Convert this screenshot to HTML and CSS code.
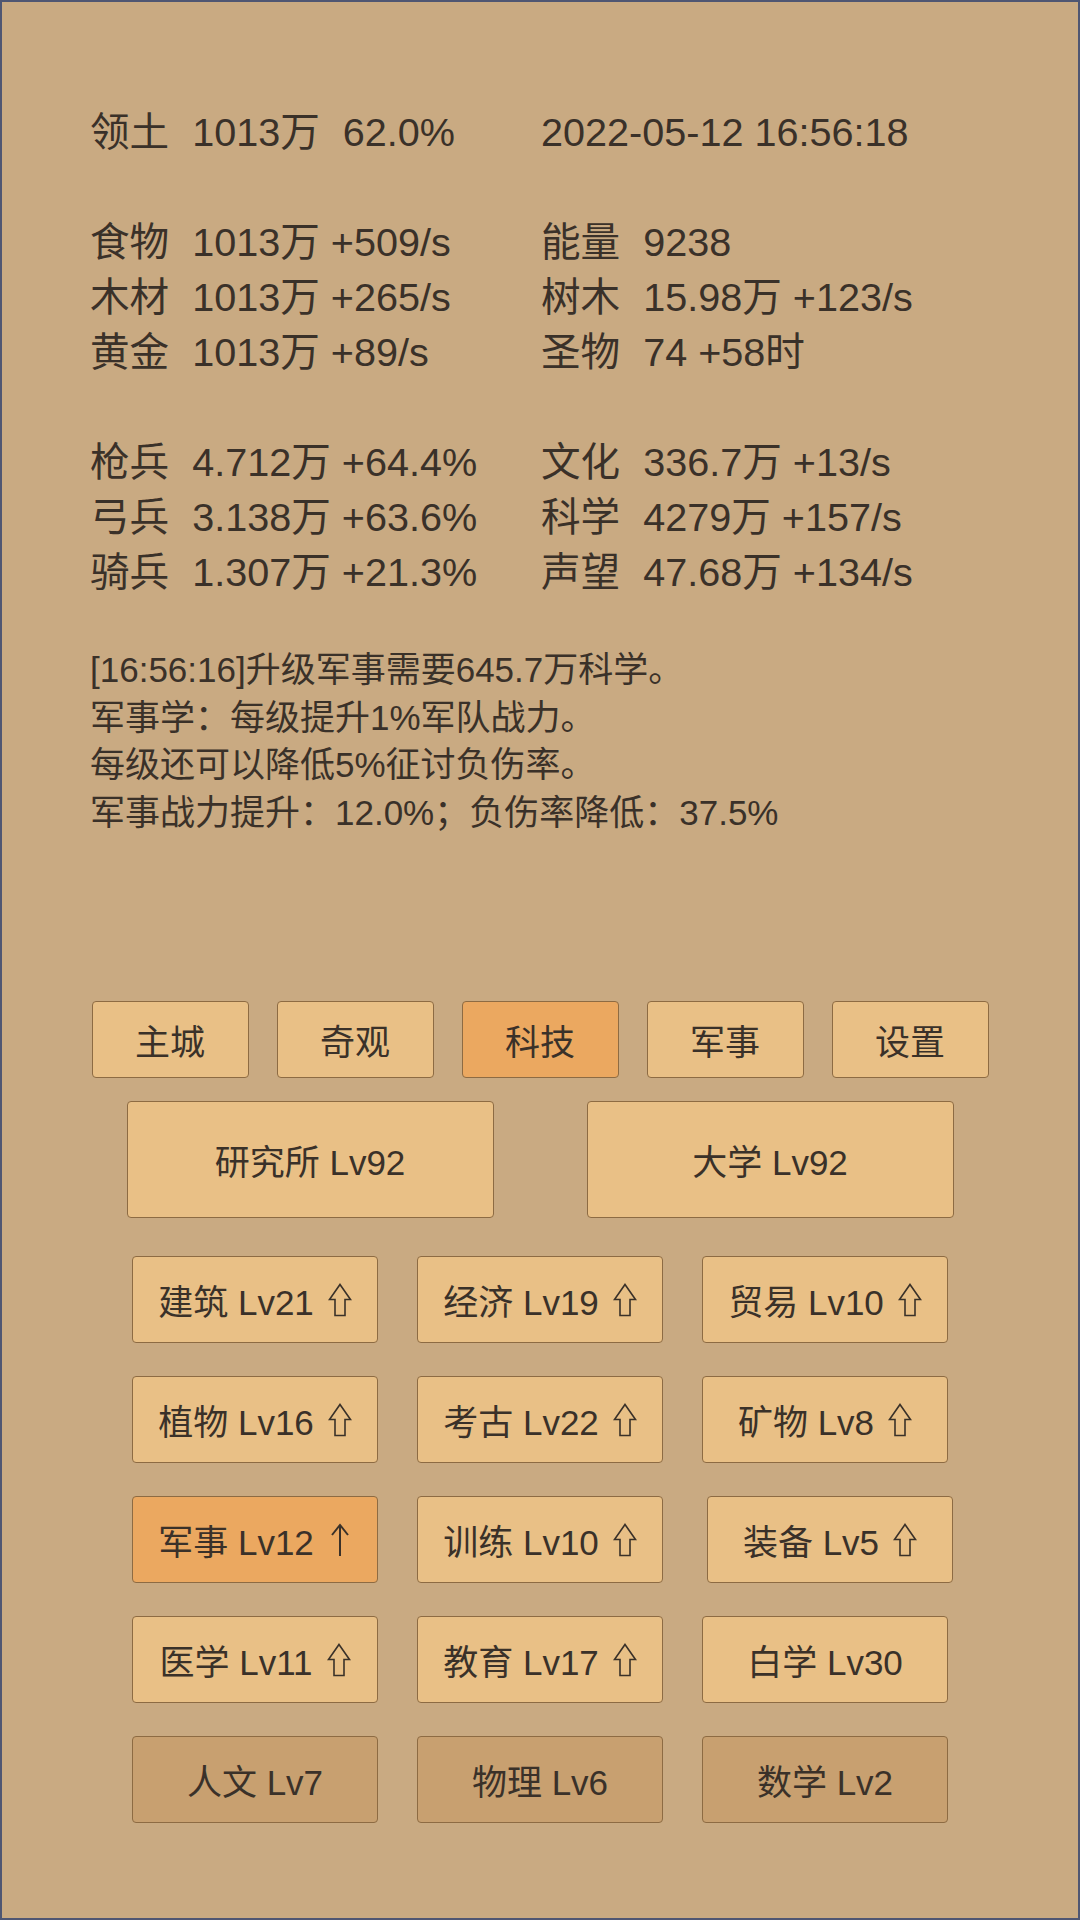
FILE: index.html
```html
<!DOCTYPE html>
<html lang="zh-CN">

<head>
    <meta charset="UTF-8">
    <meta name="viewport" content="width=device-width, initial-scale=1.0">
    <title>科技</title>
    <link rel="stylesheet" href="styles.css">
</head>

<body>
    <div id="screen">

        <div class="stats">
            <div class="row"><span class="name">领土</span><span class="val">1013万</span><span class="val">62.0%</span></div>
            <div class="row">2022-05-12 16:56:18</div>
        </div>

        <div class="stats block">
            <div class="row"><span class="name">食物</span>1013万 +509/s</div>
            <div class="row"><span class="name">能量</span>9238</div>
            <div class="row"><span class="name">木材</span>1013万 +265/s</div>
            <div class="row"><span class="name">树木</span>15.98万 +123/s</div>
            <div class="row"><span class="name">黄金</span>1013万 +89/s</div>
            <div class="row"><span class="name">圣物</span>74 +58时</div>
        </div>

        <div class="stats block">
            <div class="row"><span class="name">枪兵</span>4.712万 +64.4%</div>
            <div class="row"><span class="name">文化</span>336.7万 +13/s</div>
            <div class="row"><span class="name">弓兵</span>3.138万 +63.6%</div>
            <div class="row"><span class="name">科学</span>4279万 +157/s</div>
            <div class="row"><span class="name">骑兵</span>1.307万 +21.3%</div>
            <div class="row"><span class="name">声望</span>47.68万 +134/s</div>
        </div>

        <div id="log">
            <p>[16:56:16]升级军事需要645.7万科学。</p>
            <p>军事学：每级提升1%军队战力。</p>
            <p>每级还可以降低5%征讨负伤率。</p>
            <p>军事战力提升：12.0%；负伤率降低：37.5%</p>
        </div>

        <nav class="tabs">
            <button class="btn tab">主城</button>
            <button class="btn tab">奇观</button>
            <button class="btn tab on">科技</button>
            <button class="btn tab">军事</button>
            <button class="btn tab">设置</button>
        </nav>

        <div class="halls">
            <button class="btn hall">研究所 Lv92</button>
            <button class="btn hall">大学 Lv92</button>
        </div>

        <div class="techs">
            <button class="btn tech">建筑 Lv21 <svg class="up" viewBox="0 0 24 34"><path d="M12 1.5 L22.5 16.5 L17 16.5 L17 32.5 L7 32.5 L7 16.5 L1.5 16.5 Z" /></svg></button>
            <button class="btn tech">经济 Lv19 <svg class="up" viewBox="0 0 24 34"><path d="M12 1.5 L22.5 16.5 L17 16.5 L17 32.5 L7 32.5 L7 16.5 L1.5 16.5 Z" /></svg></button>
            <button class="btn tech">贸易 Lv10 <svg class="up" viewBox="0 0 24 34"><path d="M12 1.5 L22.5 16.5 L17 16.5 L17 32.5 L7 32.5 L7 16.5 L1.5 16.5 Z" /></svg></button>

            <button class="btn tech">植物 Lv16 <svg class="up" viewBox="0 0 24 34"><path d="M12 1.5 L22.5 16.5 L17 16.5 L17 32.5 L7 32.5 L7 16.5 L1.5 16.5 Z" /></svg></button>
            <button class="btn tech">考古 Lv22 <svg class="up" viewBox="0 0 24 34"><path d="M12 1.5 L22.5 16.5 L17 16.5 L17 32.5 L7 32.5 L7 16.5 L1.5 16.5 Z" /></svg></button>
            <button class="btn tech">矿物 Lv8 <svg class="up" viewBox="0 0 24 34"><path d="M12 1.5 L22.5 16.5 L17 16.5 L17 32.5 L7 32.5 L7 16.5 L1.5 16.5 Z" /></svg></button>

            <button class="btn tech on">军事 Lv12 <svg class="up thin" viewBox="0 0 24 34"><path d="M12 2 L12 33 M4 12 L12 2 L20 12" /></svg></button>
            <button class="btn tech">训练 Lv10 <svg class="up" viewBox="0 0 24 34"><path d="M12 1.5 L22.5 16.5 L17 16.5 L17 32.5 L7 32.5 L7 16.5 L1.5 16.5 Z" /></svg></button>
            <button class="btn tech nudge">装备 Lv5 <svg class="up" viewBox="0 0 24 34"><path d="M12 1.5 L22.5 16.5 L17 16.5 L17 32.5 L7 32.5 L7 16.5 L1.5 16.5 Z" /></svg></button>

            <button class="btn tech">医学 Lv11 <svg class="up" viewBox="0 0 24 34"><path d="M12 1.5 L22.5 16.5 L17 16.5 L17 32.5 L7 32.5 L7 16.5 L1.5 16.5 Z" /></svg></button>
            <button class="btn tech">教育 Lv17 <svg class="up" viewBox="0 0 24 34"><path d="M12 1.5 L22.5 16.5 L17 16.5 L17 32.5 L7 32.5 L7 16.5 L1.5 16.5 Z" /></svg></button>
            <button class="btn tech">白学 Lv30</button>

            <button class="btn tech locked">人文 Lv7</button>
            <button class="btn tech locked">物理 Lv6</button>
            <button class="btn tech locked">数学 Lv2</button>
        </div>

    </div>
</body>

</html>
```

FILE: styles.css
```css
body {
    margin: 0;
    padding: 0;
    font-family: 'Liberation Sans', 'Noto Sans CJK SC', sans-serif;
    color: #3a3129;
}

#screen {
    width: 1080px;
    height: 1920px;
    box-sizing: border-box;
    border: 2px solid #4f5672;
    background-color: #c9aa82;
    padding: 103px 88px 0;
}

.stats {
    display: grid;
    grid-template-columns: 451px 1fr;
    font-size: 39.6px;
    line-height: 55px;
}

.stats.block {
    margin-top: 55px;
}

.stats .row {
    white-space: nowrap;
}

.name,
.val {
    margin-right: 23px;
}

#log {
    margin-top: 46px;
    height: 355px;
    font-size: 35px;
    line-height: 47.6px;
}

#log p {
    margin: 0;
}

.btn {
    box-sizing: border-box;
    margin: 0;
    padding: 0;
    border: 1px solid #8d6b43;
    border-radius: 4px;
    background-color: #e9c086;
    color: #3a3129;
    font-family: 'Liberation Sans', 'Noto Sans CJK SC', sans-serif;
    font-size: 35px;
    display: flex;
    align-items: center;
    justify-content: center;
    gap: 14px;
    cursor: pointer;
}

.btn.on {
    background-color: #eba860;
}

.btn.locked {
    background-color: #c8a070;
}

.tabs {
    display: flex;
    justify-content: center;
    gap: 28px;
}

.tab {
    width: 157px;
    height: 77px;
}

.halls {
    display: flex;
    justify-content: center;
    gap: 93px;
    margin-top: 23px;
}

.hall {
    width: 367px;
    height: 117px;
}

.techs {
    display: grid;
    grid-template-columns: repeat(3, 246px);
    justify-content: center;
    column-gap: 39px;
    row-gap: 33px;
    margin-top: 38px;
}

.tech {
    width: 246px;
    height: 87px;
}

.tech.nudge {
    margin-left: 5px;
}

.up {
    width: 24px;
    height: 34px;
    fill: none;
    stroke: #3a3129;
    stroke-width: 1.6;
    stroke-linejoin: miter;
}

.up.thin {
    stroke-width: 2;
}
```
